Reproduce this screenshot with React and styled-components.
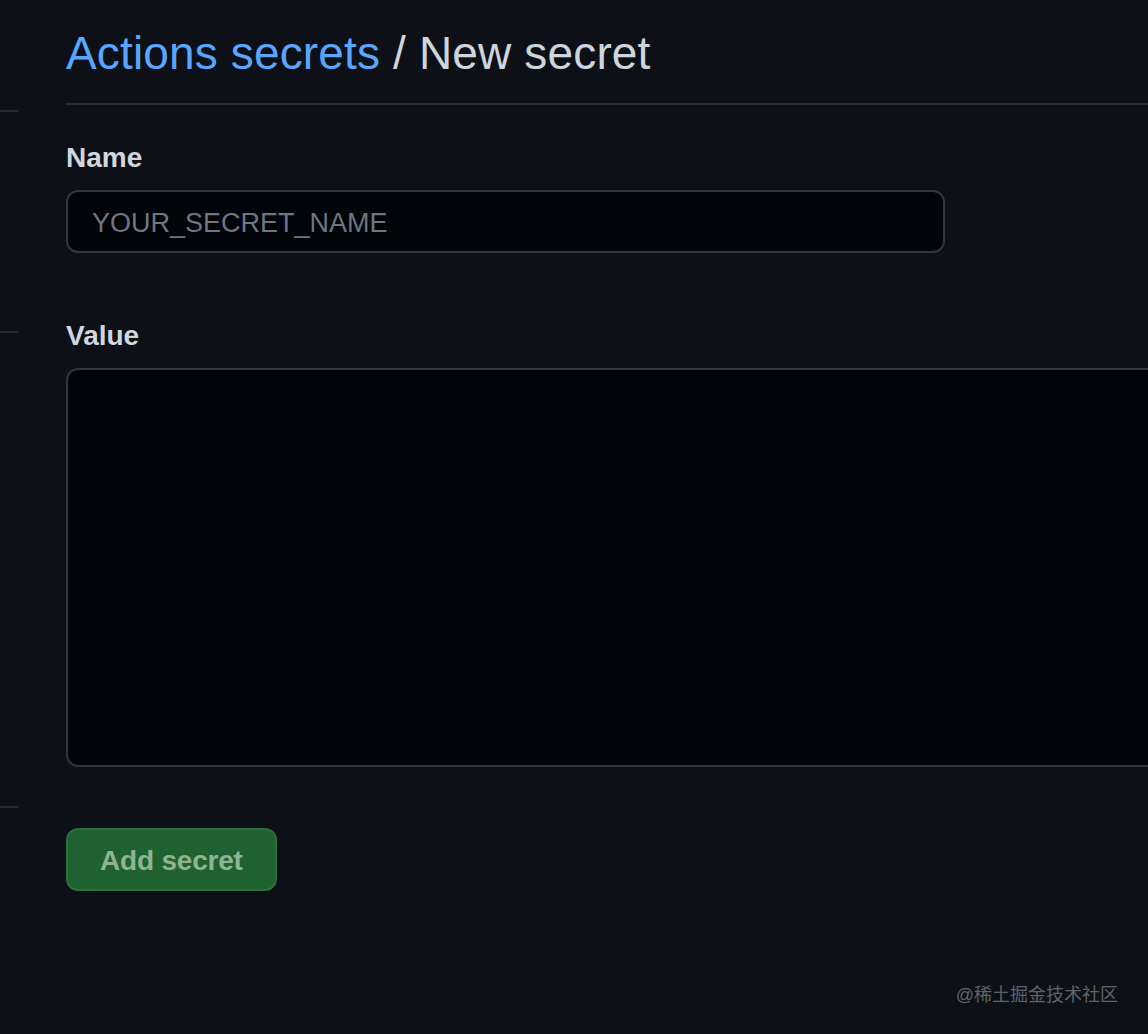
import React from "react";
import styled, { createGlobalStyle } from "styled-components";

const GlobalStyle = createGlobalStyle`
  html, body {
    margin: 0;
    padding: 0;
    background: #0d1117;
    overflow: hidden;
  }
  body {
    font-family: "Liberation Sans", Arial, sans-serif;
    color: #c9d1d9;
  }
`;

const Page = styled.div`
  position: relative;
  display: flex;
  width: 1148px;
  height: 1034px;
  background: #0d1117;
  overflow: hidden;
`;

const Sidebar = styled.div`
  width: 18px;
  flex-shrink: 0;
  display: flex;
  flex-direction: column;
`;

const SideItem = styled.div`
  height: ${props => props.h}px;
  border-bottom: 2px solid #262b32;
  box-sizing: border-box;
`;

const Main = styled.main`
  flex: 1;
  margin-left: 48px;
  padding-top: 23px;
  min-width: 0;
`;

const Subhead = styled.div`
  padding-bottom: 20px;
  border-bottom: 2px solid #262b32;
`;

const Heading = styled.h2`
  margin: 0;
  font-size: 46px;
  line-height: 60px;
  font-weight: 400;
  color: #cdd5dd;
  letter-spacing: 0.15px;
`;

const Crumb = styled.a`
  color: #58a6ff;
  text-decoration: none;
`;

const Form = styled.form`
  margin-top: 32px;
  display: flex;
  flex-direction: column;
  align-items: flex-start;
`;

const Field = styled.div`
  display: flex;
  flex-direction: column;
  margin-bottom: ${props => props.gap}px;
`;

const Label = styled.label`
  font-size: 28px;
  line-height: 42px;
  font-weight: 700;
  color: #d0d7de;
  margin-bottom: 11px;
`;

const TextInput = styled.input`
  box-sizing: border-box;
  width: ${props => props.w}px;
  height: 63px;
  padding: 3px 24px 0;
  background: #010409;
  border: 2px solid #30363d;
  border-radius: 12px;
  font-family: "Liberation Sans", Arial, sans-serif;
  font-size: 27px;
  color: #c9d1d9;
  outline: none;

  &::placeholder {
    color: #6e7681;
  }
`;

const TextArea = styled.textarea`
  box-sizing: border-box;
  width: 1120px;
  height: 399px;
  padding: 16px 24px;
  background: #010409;
  border: 2px solid #30363d;
  border-radius: 12px;
  resize: none;
  font-family: "Liberation Sans", Arial, sans-serif;
  font-size: 27px;
  color: #c9d1d9;
  outline: none;
`;

const Button = styled.button`
  box-sizing: border-box;
  height: 63px;
  padding: 2px 32px 0;
  background: #1f6130;
  border: 2px solid #2b6f3a;
  border-radius: 12px;
  font-family: "Liberation Sans", Arial, sans-serif;
  font-size: 28px;
  font-weight: 700;
  letter-spacing: -0.2px;
  color: #8fb493;
  cursor: default;
`;

const Watermark = styled.div`
  position: absolute;
  right: 30px;
  bottom: 28px;
  font-family: "Liberation Sans", "Noto Sans CJK SC", sans-serif;
  font-size: 18px;
  color: #5f636a;
`;

const App = () => (
  <React.Fragment>
    <GlobalStyle />
    <Page>
      <Sidebar>
        <SideItem h={112} />
        <SideItem h={221} />
        <SideItem h={475} />
      </Sidebar>
      <Main>
        <Subhead>
          <Heading>
            <Crumb href="#">Actions secrets</Crumb> / New secret
          </Heading>
        </Subhead>
        <Form onSubmit={e => e.preventDefault()}>
          <Field gap={62}>
            <Label htmlFor="secret_name">Name</Label>
            <TextInput id="secret_name" w={879} placeholder="YOUR_SECRET_NAME" />
          </Field>
          <Field gap={61}>
            <Label htmlFor="secret_value">Value</Label>
            <TextArea id="secret_value" />
          </Field>
          <Button type="submit" disabled>Add secret</Button>
        </Form>
      </Main>
      <Watermark>@稀土掘金技术社区</Watermark>
    </Page>
  </React.Fragment>
);

export default App;
